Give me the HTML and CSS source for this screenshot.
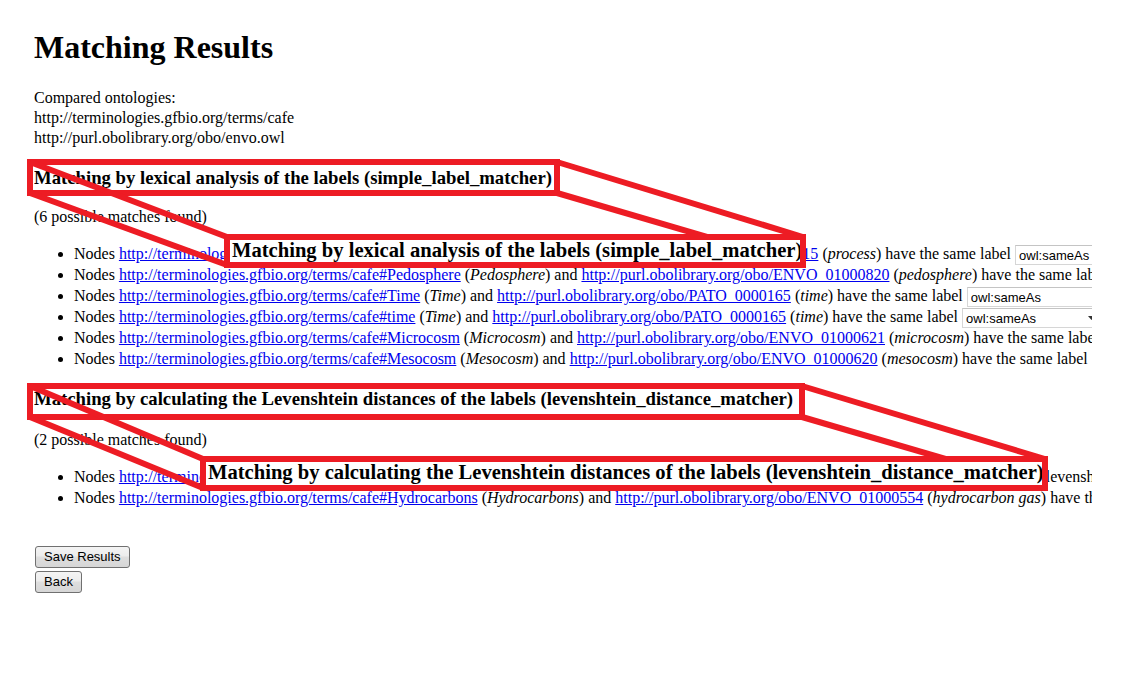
FILE: index.html
```html
<!DOCTYPE html>
<html>
<head>
<meta charset="utf-8">
<title>Matching Results</title>
<link rel="stylesheet" href="styles.css">
</head>
<body>
<div class="page">
  <h1 class="title">Matching Results</h1>
  <p class="compared">Compared ontologies:<br>http://terminologies.gfbio.org/terms/cafe<br>http://purl.obolibrary.org/obo/envo.owl</p>

  <h3 class="matcher">Matching by lexical analysis of the labels (simple_label_matcher)</h3>
  <p class="count">(6 possible matches found)</p>
  <ul class="matches">
    <li>Nodes <a href="#">http://terminologies.gfbio.org/terms/cafe#Process</a> (<i>Process</i>) and <a href="#">http://purl.obolibrary.org/obo/BFO_0000015</a> (<i>process</i>) have the same label <select class="rel"><option>owl:sameAs</option></select></li>
    <li>Nodes <a href="#">http://terminologies.gfbio.org/terms/cafe#Pedosphere</a> (<i>Pedosphere</i>) and <a href="#">http://purl.obolibrary.org/obo/ENVO_01000820</a> (<i>pedosphere</i>) have the same label <select class="rel"><option>owl:sameAs</option></select></li>
    <li>Nodes <a href="#">http://terminologies.gfbio.org/terms/cafe#Time</a> (<i>Time</i>) and <a href="#">http://purl.obolibrary.org/obo/PATO_0000165</a> (<i>time</i>) have the same label <select class="rel"><option>owl:sameAs</option></select></li>
    <li>Nodes <a href="#">http://terminologies.gfbio.org/terms/cafe#time</a> (<i>Time</i>) and <a href="#">http://purl.obolibrary.org/obo/PATO_0000165</a> (<i>time</i>) have the same label <select class="rel"><option>owl:sameAs</option></select></li>
    <li>Nodes <a href="#">http://terminologies.gfbio.org/terms/cafe#Microcosm</a> (<i>Microcosm</i>) and <a href="#">http://purl.obolibrary.org/obo/ENVO_01000621</a> (<i>microcosm</i>) have the same label <select class="rel"><option>owl:sameAs</option></select></li>
    <li>Nodes <a href="#">http://terminologies.gfbio.org/terms/cafe#Mesocosm</a> (<i>Mesocosm</i>) and <a href="#">http://purl.obolibrary.org/obo/ENVO_01000620</a> (<i>mesocosm</i>) have the same label <select class="rel"><option>owl:sameAs</option></select></li>
  </ul>

  <h3 class="matcher second">Matching by calculating the Levenshtein distances of the labels (levenshtein_distance_matcher)</h3>
  <p class="count second">(2 possible matches found)</p>
  <ul class="matches second">
    <li>Nodes <a href="#">http://terminologies.gfbio.org/terms/cafe#Hydrocarbon</a> (<i>Hydrocarbon</i>) and <a href="#">http://purl.obolibrary.org/obo/ENVO_01000554</a> (<i>hydrocarbon</i>) have levenshtein distance 1 <select class="rel"><option>owl:sameAs</option></select></li>
    <li>Nodes <a href="#">http://terminologies.gfbio.org/terms/cafe#Hydrocarbons</a> (<i>Hydrocarbons</i>) and <a href="#">http://purl.obolibrary.org/obo/ENVO_01000554</a> (<i>hydrocarbon gas</i>) have the levenshtein distance 4 <select class="rel"><option>owl:sameAs</option></select></li>
  </ul>

  <div class="actions">
    <button class="btn" type="button">Save Results</button>
    <button class="btn" type="button">Back</button>
  </div>
</div>

<div class="callouts">
  <svg class="callout-lines" width="1142" height="691" viewBox="0 0 1142 691">
    <g fill="none" stroke="#ed1c24" stroke-width="6">
      <rect x="30" y="162" width="527" height="31"/>
      <line x1="30" y1="162" x2="227" y2="237"/>
      <line x1="557" y1="162" x2="803" y2="237"/>
      <line x1="30" y1="193" x2="227" y2="265"/>
      <line x1="557" y1="193" x2="803" y2="265"/>
      <rect x="30" y="386" width="772" height="31"/>
      <line x1="30" y1="386" x2="203" y2="459"/>
      <line x1="802" y1="386" x2="1045" y2="459"/>
      <line x1="30" y1="417" x2="203" y2="488"/>
      <line x1="802" y1="417" x2="1045" y2="488"/>
    </g>
  </svg>
  <div class="zoom zoom-first">Matching by lexical analysis of the labels (simple_label_matcher)</div>
  <div class="zoom zoom-second">Matching by calculating the Levenshtein distances of the labels (levenshtein_distance_matcher)</div>
</div>
</body>
</html>
```

FILE: styles.css
```css
html, body {
  margin: 0;
  padding: 0;
  background: #ffffff;
}

body {
  position: relative;
  width: 1142px;
  height: 691px;
  overflow: hidden;
  font-family: "Liberation Serif", "Times New Roman", serif;
  font-size: 16px;
  color: #000000;
}

.page {
  margin-left: 34px;
  width: 1058px;
  padding-top: 29px;
  overflow: hidden;
}

.title {
  margin: 0;
  font-size: 32px;
  line-height: 37px;
  font-weight: bold;
}

.compared {
  margin: 22px 0 0;
  line-height: 20px;
}

.matcher {
  margin: 19px 0 0;
  font-size: 18.72px;
  line-height: 22px;
  font-weight: bold;
  white-space: nowrap;
}

.matcher.second {
  margin-top: 19px;
}

.count {
  margin: 18px 0 0;
  line-height: 20px;
}

.count.second {
  margin-top: 20px;
}

.matches {
  margin: 16px 0 0;
  padding-left: 40px;
  list-style: disc;
}

.matches li {
  height: 21px;
  line-height: 21px;
  white-space: nowrap;
}

.matches a {
  color: #0000ee;
  text-decoration: underline;
}

.rel {
  -webkit-appearance: none;
  appearance: none;
  box-sizing: border-box;
  width: 137px;
  height: 20px;
  margin: 0;
  padding: 0 0 0 3px;
  vertical-align: middle;
  font-family: "Liberation Sans", Arial, sans-serif;
  font-size: 13px;
  color: #000000;
  border: 1px solid #d6d6d6;
  border-top-color: #c4c4c4;
  border-radius: 0;
  background: #ffffff url("data:image/svg+xml;utf8,<svg xmlns='http://www.w3.org/2000/svg' width='7' height='4'><path d='M0 0h7L3.5 4z' fill='%23333'/></svg>") no-repeat right 3px center;
}

.actions {
  display: flex;
  flex-direction: column;
  align-items: flex-start;
  gap: 3px;
  margin-top: 38px;
  padding-left: 1px;
}

.btn {
  box-sizing: border-box;
  height: 22px;
  margin: 0;
  padding: 0 8px;
  font-family: "Liberation Sans", Arial, sans-serif;
  font-size: 13px;
  line-height: 20px;
  color: #000000;
  border: 1px solid #707070;
  border-radius: 3px;
  background: linear-gradient(#f4f4f4 0%, #ececec 45%, #dedede 50%, #d6d6d6 100%);
}

.callouts {
  position: absolute;
  left: 0;
  top: 0;
  width: 1142px;
  height: 691px;
  pointer-events: none;
}

.callout-lines {
  position: absolute;
  left: 0;
  top: 0;
}

.zoom {
  position: absolute;
  box-sizing: border-box;
  border: 6px solid #ed1c24;
  background: #ffffff;
  padding-left: 2px;
  font-size: 20.6px;
  line-height: 21px;
  font-weight: bold;
  white-space: nowrap;
  overflow: hidden;
}

.zoom-first {
  left: 224px;
  top: 234px;
  width: 582px;
  height: 34px;
}

.zoom-second {
  left: 200px;
  top: 456px;
  width: 848px;
  height: 35px;
}
```
